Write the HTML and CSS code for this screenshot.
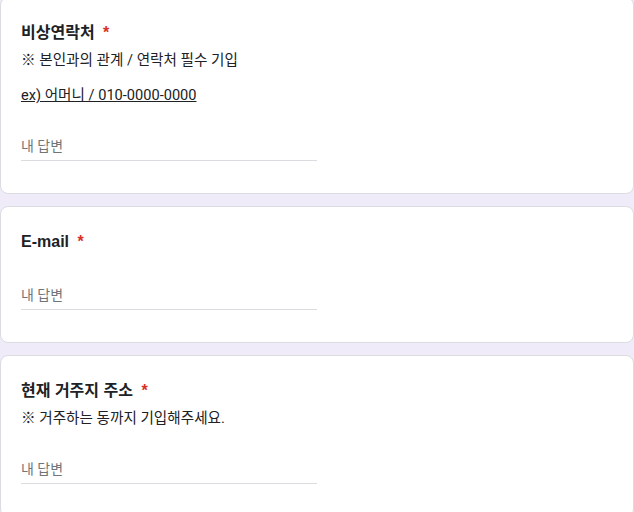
FILE: index.html
```html
<!DOCTYPE html>
<html lang="ko">

<head>
    <meta charset="UTF-8">
    <meta name="viewport" content="width=device-width, initial-scale=1.0">
    <title>설문지</title>

    <link rel="stylesheet" href="styles.css">
</head>

<body>
    <div class="form">
        <div class="card">
            <div class="title">비상연락처 <span class="req">*</span></div>
            <div class="desc">※ 본인과의 관계 / 연락처 필수 기입</div>
            <div class="desc example">ex) 어머니 / 010-0000-0000</div>
            <div class="answer">내 답변</div>
        </div>

        <div class="card">
            <div class="title">E-mail <span class="req">*</span></div>
            <div class="answer">내 답변</div>
        </div>

        <div class="card">
            <div class="title">현재 거주지 주소 <span class="req">*</span></div>
            <div class="desc">※ 거주하는 동까지 기입해주세요.</div>
            <div class="answer">내 답변</div>
        </div>
    </div>
</body>

</html>
```

FILE: styles.css
```css
body {
    margin: 0;
    background: #f0ebf8;
}

.form {
    margin-top: -3px;
}

.card {
    background: #fff;
    border: 1px solid #dadce0;
    border-radius: 8px;
    padding: 23px 20px 32px 20px;
    margin-bottom: 12px;
}

.title {
    font-family: "Liberation Sans", "Noto Sans CJK KR", sans-serif;
    font-size: 16px;
    font-weight: bold;
    line-height: 24px;
    color: #202124;
}

.req {
    color: #d93025;
    padding-left: 4px;
}

.desc {
    font-family: Roboto, "Noto Sans CJK KR", sans-serif;
    font-size: 14.6px;
    line-height: 20px;
    color: #202124;
    margin-top: 5px;
}

.example {
    margin-top: 15px;
    text-decoration: underline;
}

.answer {
    width: 50%;
    margin-top: 28px;
    padding-top: 1px;
    padding-bottom: 2px;
    border-bottom: 1px solid #dadce0;
    font-family: Roboto, "Noto Sans CJK KR", sans-serif;
    font-size: 14px;
    line-height: 24px;
    color: #70757a;
}
```
